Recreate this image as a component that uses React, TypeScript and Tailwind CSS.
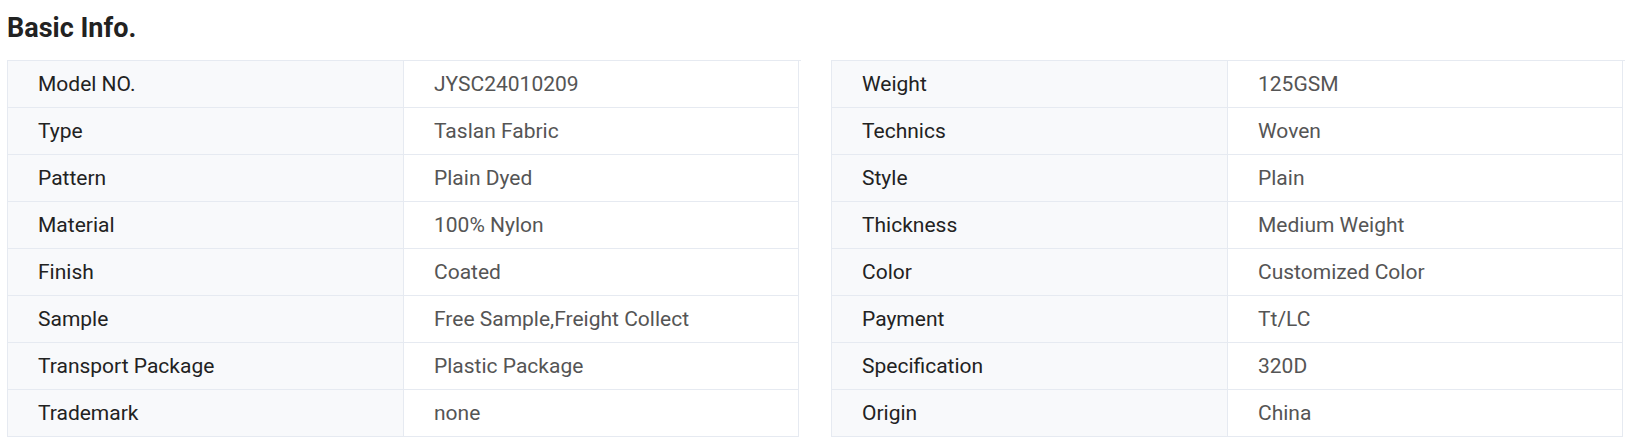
import React from "react";

const left: [string, string][] = [
  ["Model NO.", "JYSC24010209"],
  ["Type", "Taslan Fabric"],
  ["Pattern", "Plain Dyed"],
  ["Material", "100% Nylon"],
  ["Finish", "Coated"],
  ["Sample", "Free Sample,Freight Collect"],
  ["Transport Package", "Plastic Package"],
  ["Trademark", "none"],
];

const right: [string, string][] = [
  ["Weight", "125GSM"],
  ["Technics", "Woven"],
  ["Style", "Plain"],
  ["Thickness", "Medium Weight"],
  ["Color", "Customized Color"],
  ["Payment", "Tt/LC"],
  ["Specification", "320D"],
  ["Origin", "China"],
];

function Table({ rows }: { rows: [string, string][] }) {
  return (
    <div className="grid grid-cols-[396px_395px] border-l border-t border-[#e6eaf1] w-[794px]">
      {rows.map(([k, v]) => (
        <React.Fragment key={k}>
          <div className="h-[44px] pt-[2px] box-content border-r border-b border-[#e6eaf1] bg-[#f8f9fb] pl-[30px] flex items-center text-[21px] text-[#222222]">
            {k}
          </div>
          <div className="h-[44px] pt-[2px] box-content border-r border-b border-[#e6eaf1] bg-white pl-[30px] flex items-center text-[21px] text-[#555555]">
            {v}
          </div>
        </React.Fragment>
      ))}
    </div>
  );
}

export default function App() {
  return (
    <div
      className="w-[1633px] h-[444px] bg-white px-[7px] pt-[13px]"
      style={{ fontFamily: "Roboto, 'Liberation Sans', sans-serif" }}
    >
      <h2 className="text-[27px] leading-[30px] font-bold text-[#222222] mb-[17px]">Basic Info.</h2>
      <div className="flex gap-[30px]">
        <Table rows={left} />
        <Table rows={right} />
      </div>
    </div>
  );
}
